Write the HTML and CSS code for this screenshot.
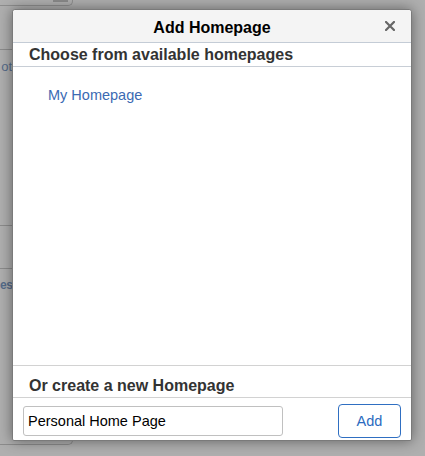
FILE: index.html
```html
<!DOCTYPE html>
<html>
<head>
<meta charset="utf-8">
<title>Add Homepage</title>
<link rel="stylesheet" href="styles.css">
</head>
<body>
<div class="page">
  <div class="top-box"><span class="top-btn"></span></div>
  <div class="side">
    <div class="side-item side-line-top"><span class="side-text">ot</span></div>
    <div class="side-gap"></div>
    <div class="side-item side-mid"></div>
    <div class="side-item side-last"><span class="side-text bold">es</span></div>
  </div>
  <div class="bottom-box"></div>
</div>

<div class="dialog">
  <div class="dlg-header">
    <span class="dlg-title">Add Homepage</span>
    <button class="dlg-close" aria-label="Close">
      <svg width="10" height="10" viewBox="0 0 10 10"><path d="M1 1 L9 9 M9 1 L1 9" stroke="#666" stroke-width="2.2" stroke-linecap="square"/></svg>
    </button>
  </div>
  <div class="sec-head first">Choose from available homepages</div>
  <div class="list">
    <a class="list-item">My Homepage</a>
  </div>
  <div class="sec-head second">Or create a new Homepage</div>
  <div class="footer">
    <input class="name-input" type="text" value="Personal Home Page">
    <button class="add-btn">Add</button>
  </div>
</div>
</body>
</html>
```

FILE: styles.css
```css
* { box-sizing: border-box; }
html, body {
  margin: 0;
  padding: 0;
}
body {
  width: 425px;
  height: 456px;
  overflow: hidden;
  background: #afafaf;
  font-family: "Liberation Sans", Arial, sans-serif;
  position: relative;
}

/* dimmed page behind the dialog */
.page {
  height: 456px;
  display: flex;
  flex-direction: column;
}
.top-box {
  width: 73px;
  height: 6px;
  border: 1px solid #8e8e8e;
  border-top: none;
  border-left: none;
  border-radius: 0 0 5px 0;
  position: relative;
}
.top-btn {
  position: absolute;
  left: 53px;
  top: 0;
  width: 15px;
  height: 2px;
  background: #8a8a8a;
}
.side {
  margin-top: 43px;
  width: 12px;
  display: flex;
  flex-direction: column;
}
.side-item {
  border-top: 1px solid #8c8c8c;
  white-space: nowrap;
  text-align: right;
}
.side-line-top { height: 40px; padding-top: 7px; }
.side-gap { height: 136px; }
.side-mid { height: 43px; }
.side-last { height: 40px; padding-top: 6px; }
.side-text {
  font-size: 13px;
  line-height: 15px;
  color: #566c8a;
}
.side-text.bold {
  font-size: 12px;
  letter-spacing: -0.5px;
  font-weight: bold;
}
.bottom-box {
  margin-top: auto;
  margin-bottom: 11px;
  width: 73px;
  height: 8px;
  border-bottom: 1px solid #8c8c8c;
  border-right: 1px solid #8c8c8c;
  border-radius: 0 0 5px 0;
}

/* dialog */
.dialog {
  position: absolute;
  left: 12px;
  top: 9px;
  width: 400px;
  height: 432px;
  background: #fff;
  border: 1px solid #7a7a7a;
  border-radius: 3px 3px 2px 2px;
  box-shadow: 0 0 14px rgba(0, 0, 0, 0.45);
  display: flex;
  flex-direction: column;
}
.dlg-header {
  position: relative;
  background: #f4f4f4;
  border-bottom: 1px solid #c4ccd6;
  border-radius: 3px 3px 0 0;
  padding: 9px 0 5px;
  text-align: center;
}
.dlg-title {
  display: block;
  font-size: 16px;
  line-height: 18px;
  font-weight: bold;
  color: #000;
}
.dlg-close {
  position: absolute;
  right: 16px;
  top: 11px;
  width: 10px;
  height: 10px;
  padding: 0;
  border: none;
  background: none;
  display: block;
}
.dlg-close svg { display: block; }

.sec-head {
  font-size: 16px;
  line-height: 18px;
  font-weight: bold;
  color: #333;
  padding-left: 16px;
}
.sec-head.first {
  padding-top: 3px;
  padding-bottom: 2px;
  border-bottom: 1px solid #c8ced6;
}
.sec-head.second {
  padding-top: 11px;
  padding-bottom: 2px;
  border-top: 1px solid #d2d2d2;
  border-bottom: 1px solid #d2d2d2;
}

.list {
  flex: 1;
  padding: 20px 0 0 35px;
}
.list-item {
  display: block;
  font-size: 14.5px;
  line-height: 17px;
  color: #3b6ab3;
}

.footer {
  display: flex;
  align-items: center;
  justify-content: space-between;
  padding: 6px 10px 2px;
  height: 42px;
}
.name-input {
  width: 260px;
  height: 30px;
  border: 1px solid #c0c0c0;
  border-radius: 3px;
  padding: 0 4px;
  font-family: "Liberation Sans", Arial, sans-serif;
  font-size: 14.5px;
  color: #000;
  background: #fff;
  outline: none;
}
.add-btn {
  width: 63px;
  height: 34px;
  border: 1px solid #2f6fc2;
  border-radius: 4px;
  background: #fff;
  color: #2c6bc0;
  font-family: "Liberation Sans", Arial, sans-serif;
  font-size: 14.5px;
  padding: 0;
}
```
